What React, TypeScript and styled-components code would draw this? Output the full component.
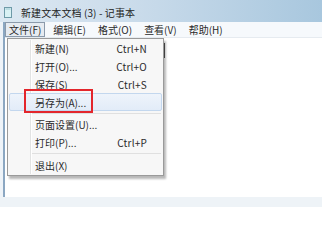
import React from "react";
import styled, { createGlobalStyle } from "styled-components";

const GlobalStyle = createGlobalStyle`
  html, body {
    margin: 0;
    padding: 0;
    width: 322px;
    height: 207px;
    overflow: hidden;
    background: #ffffff;
  }
  * {
    box-sizing: border-box;
  }
`;

const font = `"Noto Sans CJK SC", "Noto Sans", "Liberation Sans", sans-serif`;

const Window = styled.div`
  width: 322px;
  height: 207px;
  display: flex;
  flex-direction: column;
  font-family: ${font};
  color: #2a2a2a;
`;

const TitleBar = styled.div`
  height: 22px;
  display: flex;
  align-items: center;
  gap: 9px;
  padding: 2px 0 0 4px;
  background: linear-gradient(to right, #dce8f2 0%, #cbdceb 40%, #a8c7de 100%);
  font-size: 10px;
  color: #222;
`;

const TitleText = styled.span`
  letter-spacing: 0.1px;
`;

const Frame = styled.div`
  flex: 1;
  display: flex;
  min-height: 0;
`;

const LeftEdge = styled.div`
  width: 5px;
  background: linear-gradient(to right, #eef3f8 0 3px, #8ba7c2 3px 5px);
`;

const Content = styled.div`
  flex: 1;
  display: flex;
  flex-direction: column;
`;

const MenuBar = styled.div`
  height: 16px;
  display: flex;
  align-items: stretch;
  gap: 4px;
  background: #f6f9fc;
  border-bottom: 1px solid #e6ebf0;
  font-size: 10px;
`;

const MenuTitle = styled.div<{ $active?: boolean }>`
  display: flex;
  align-items: center;
  padding: 0 3px;
  border: 1px solid ${(p) => (p.$active ? "#8b9aab" : "transparent")};
  background: ${(p) => (p.$active ? "#e6ebf1" : "transparent")};
`;

const Editor = styled.div`
  flex: 1;
  position: relative;
  background: #ffffff;
`;

const Caret = styled.div`
  position: absolute;
  left: 159px;
  top: 5px;
  width: 1px;
  height: 15px;
  background: #555;
`;

const Dropdown = styled.div`
  position: absolute;
  left: 2px;
  top: 0;
  width: 157px;
  padding: 0 0 1px;
  background: #f7f7f7;
  border: 1px solid #9a9a9a;
  box-shadow: 2px 3px 2px rgba(0, 0, 0, 0.28);
  font-size: 10px;
  display: flex;
  flex-direction: column;
  &::before {
    content: "";
    position: absolute;
    left: 22px;
    top: 1px;
    bottom: 1px;
    width: 1px;
    background: #e2e3e3;
    border-right: 1px solid #ffffff;
  }
`;

const Item = styled.div<{ $hover?: boolean }>`
  position: relative;
  height: 18px;
  margin: 0 1px;
  display: flex;
  align-items: center;
  justify-content: space-between;
  padding: 0 14px 0 25px;
  border: 1px solid ${(p) => (p.$hover ? "#c3d7ee" : "transparent")};
  border-radius: 2px;
  background: ${(p) =>
    p.$hover ? "linear-gradient(#eef4fb, #e2ecf8)" : "transparent"};
`;

const Shortcut = styled.span`
  letter-spacing: 0.2px;
`;

const Separator = styled.div<{ $h: number }>`
  height: ${(p) => p.$h}px;
  display: flex;
  align-items: center;
  padding-left: 24px;
  &::after {
    content: "";
    flex: 1;
    height: 1px;
    background: #e0e0e0;
    margin-right: 2px;
  }
`;

const Highlight = styled.div`
  position: absolute;
  left: 14px;
  top: -5px;
  width: 69px;
  height: 24px;
  border: 2px solid #e3262c;
`;

const BottomStrip = styled.div`
  height: 10px;
  background: #eef3f7;
`;

const NotepadIcon = () => (
  <svg width="8" height="11" viewBox="0 0 8 11">
    <rect x="0.5" y="0.5" width="7" height="10" fill="#d9f1f4" stroke="#6e9aa8" />
    <rect x="1.5" y="1.5" width="5" height="1" fill="#9cc9d3" />
  </svg>
);

type Entry =
  | { label: string; key?: string; hover?: boolean; mark?: boolean }
  | { sep: number };

const entries: Entry[] = [
  { label: "新建(N)", key: "Ctrl+N" },
  { label: "打开(O)...", key: "Ctrl+O" },
  { label: "保存(S)", key: "Ctrl+S" },
  { label: "另存为(A)...", hover: true, mark: true },
  { sep: 4 },
  { label: "页面设置(U)..." },
  { label: "打印(P)...", key: "Ctrl+P" },
  { sep: 5 },
  { label: "退出(X)" },
];

const menus = ["文件(F)", "编辑(E)", "格式(O)", "查看(V)", "帮助(H)"];

export default function App() {
  return (
    <Window>
      <GlobalStyle />
      <TitleBar>
        <NotepadIcon />
        <TitleText>新建文本文档 (3) - 记事本</TitleText>
      </TitleBar>
      <Frame>
        <LeftEdge />
        <Content>
          <MenuBar>
            {menus.map((m, i) => (
              <MenuTitle key={m} $active={i === 0}>
                {m}
              </MenuTitle>
            ))}
          </MenuBar>
          <Editor>
            <Caret />
            <Dropdown>
              {entries.map((e, i) =>
                "sep" in e ? (
                  <Separator key={i} $h={e.sep} />
                ) : (
                  <Item key={i} $hover={e.hover}>
                    <span>{e.label}</span>
                    {e.key && <Shortcut>{e.key}</Shortcut>}
                    {e.mark && <Highlight />}
                  </Item>
                )
              )}
            </Dropdown>
          </Editor>
        </Content>
      </Frame>
      <BottomStrip />
    </Window>
  );
}
